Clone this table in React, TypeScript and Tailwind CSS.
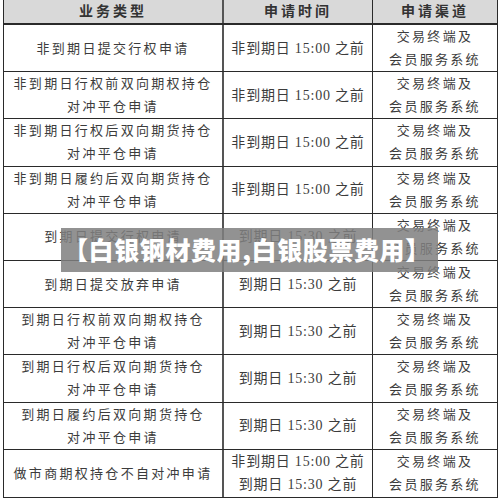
const rows: { type: string[]; time: string[] }[] = [
  { type: ["非到期日提交行权申请"], time: ["非到期日 15:00 之前"] },
  { type: ["非到期日行权前双向期权持仓", "对冲平仓申请"], time: ["非到期日 15:00 之前"] },
  { type: ["非到期日行权后双向期货持仓", "对冲平仓申请"], time: ["非到期日 15:00 之前"] },
  { type: ["非到期日履约后双向期货持仓", "对冲平仓申请"], time: ["非到期日 15:00 之前"] },
  { type: ["到期日提交行权申请"], time: ["到期日 15:30 之前"] },
  { type: ["到期日提交放弃申请"], time: ["到期日 15:30 之前"] },
  { type: ["到期日行权前双向期权持仓", "对冲平仓申请"], time: ["到期日 15:30 之前"] },
  { type: ["到期日行权后双向期货持仓", "对冲平仓申请"], time: ["到期日 15:30 之前"] },
  { type: ["到期日履约后双向期货持仓", "对冲平仓申请"], time: ["到期日 15:30 之前"] },
  { type: ["做市商期权持仓不自对冲申请"], time: ["非到期日 15:00 之前", "到期日 15:30 之前"] },
];

function Lines({ lines }: { lines: string[] }) {
  return (
    <div className="flex flex-col items-center leading-[23px]">
      {lines.map((l) => (
        <span key={l}>{l}</span>
      ))}
    </div>
  );
}

export default function App() {
  return (
    <div
      className="relative h-[500px] w-[500px] overflow-hidden bg-white pl-[3px] text-[#3c3c3c]"
      style={{ fontFamily: '"Liberation Serif", "Noto Sans CJK SC", serif' }}
    >
      <div className="flex w-[495px] flex-col border-x border-b border-[#2a2a2a]">
        <div className="flex h-[25px] border-b-2 border-[#2a2a2a] bg-[#d9d9d9] text-[14px] font-bold tracking-[3px] text-[#333]">
          <div className="flex w-[220px] items-center justify-center border-r-2 border-[#555]">业务类型</div>
          <div className="flex w-[149px] items-center justify-center border-r border-[#2a2a2a]">申请时间</div>
          <div className="flex flex-1 items-center justify-center">申请渠道</div>
        </div>
        {rows.map((r, i) => (
          <div
            key={i}
            className="flex h-[47.2px] border-b border-[#2a2a2a] text-[13px] tracking-[2.3px] last:border-b-0"
          >
            <div className="flex w-[220px] items-center justify-center border-r-2 border-[#555]">
              <Lines lines={r.type} />
            </div>
            <div className="flex w-[149px] items-center justify-center border-r border-[#2a2a2a] text-[14px] tracking-[0.8px]">
              <Lines lines={r.time} />
            </div>
            <div className="flex flex-1 items-center justify-center">
              <Lines lines={["交易终端及", "会员服务系统"]} />
            </div>
          </div>
        ))}
      </div>
      <div
        className="absolute left-[61px] top-[228px] flex h-[44px] w-[377px] items-center bg-[#7f7f7f]/85 pl-[2px] text-[25px] font-black tracking-[0.6px] text-white"
        style={{ fontFamily: '"Noto Sans CJK SC", sans-serif' }}
      >
        【白银钢材费用,白银股票费用】
      </div>
    </div>
  );
}
